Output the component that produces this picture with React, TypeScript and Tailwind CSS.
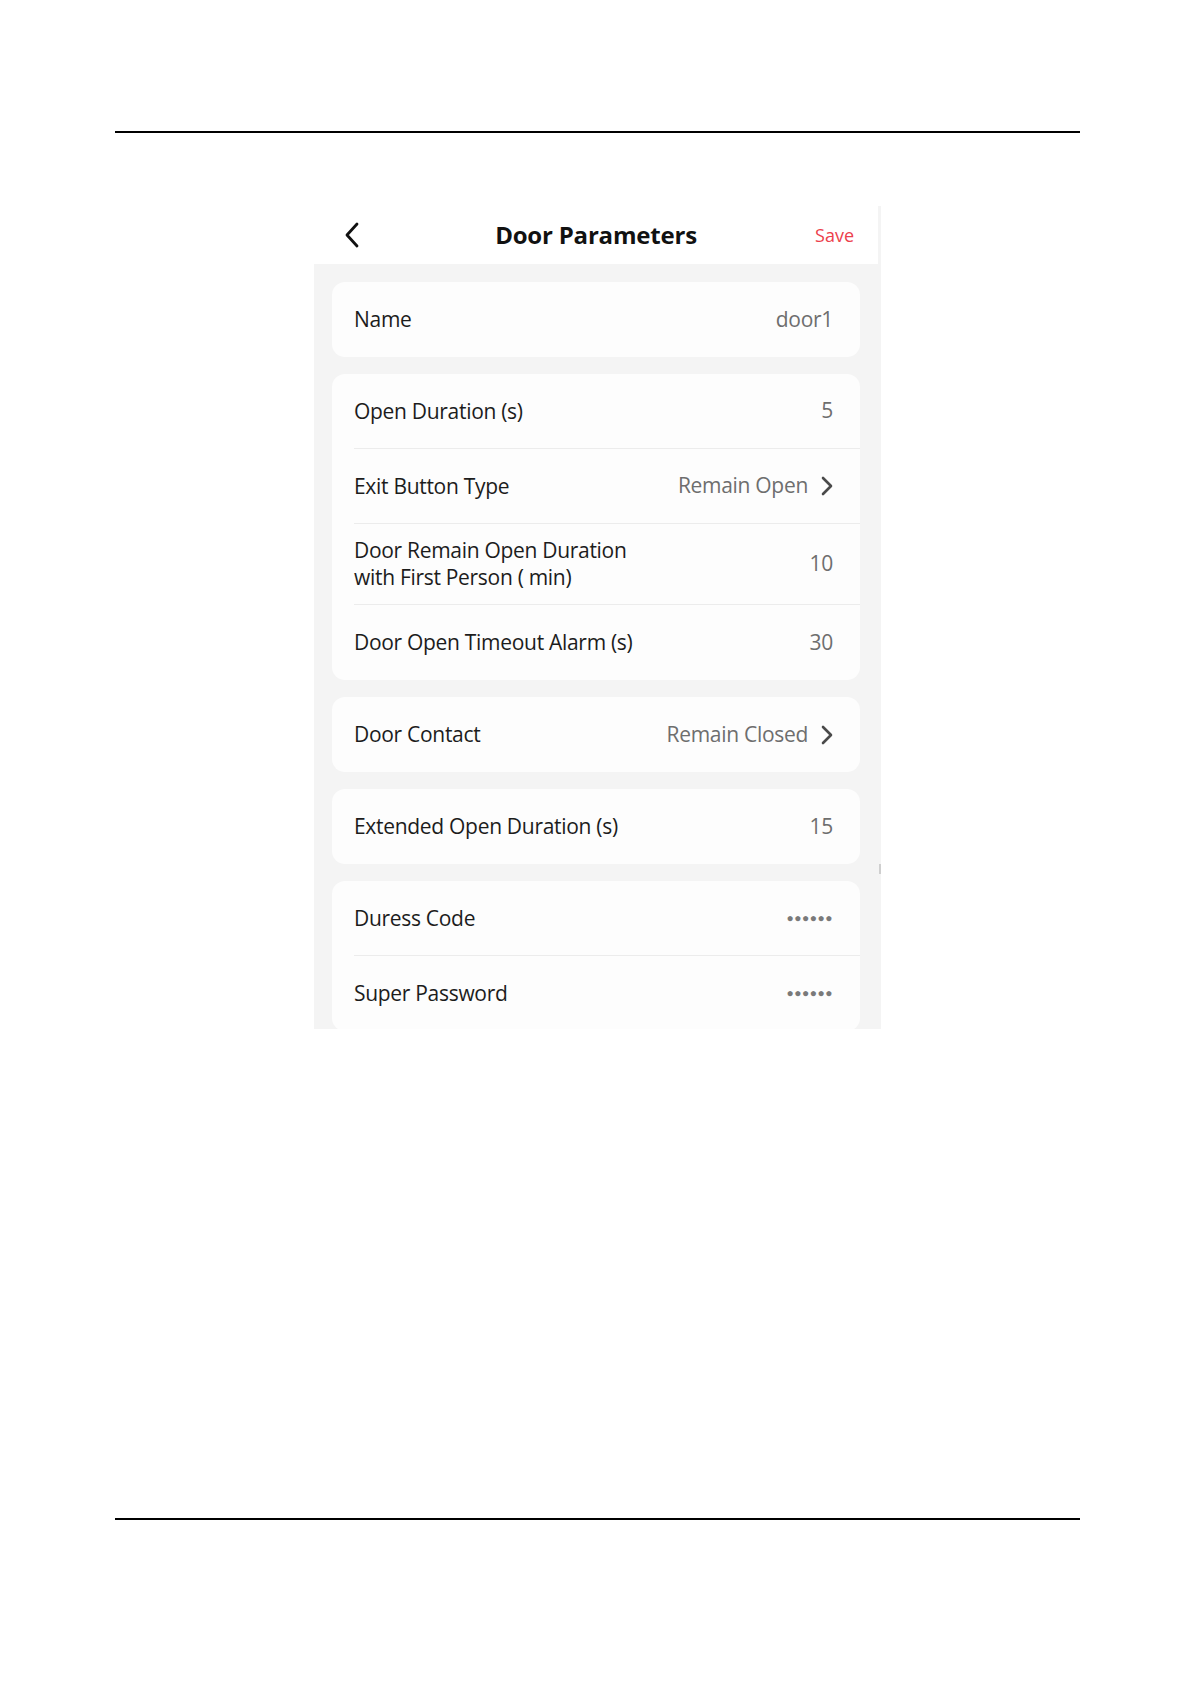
import { ReactNode } from "react";

function Chevron() {
  return (
    <svg width="12" height="20" viewBox="0 0 12 20" className="ml-[13px] shrink-0">
      <path d="M2 2 L10 10 L2 18" fill="none" stroke="#4a4a4a" strokeWidth="2.6" strokeLinecap="round" strokeLinejoin="round" />
    </svg>
  );
}

function Row({ label, value, arrow, tall, last }: { label: ReactNode; value: ReactNode; arrow?: boolean; tall?: boolean; last?: boolean }) {
  return (
    <div className={`flex items-center pl-[22px] ${tall ? "h-[81px]" : "h-[75px]"}`}>
      <div className={`flex items-center h-full w-full pr-[27px] ${last ? "" : "border-b border-[#ececec]"}`}>
        <div className="flex-1 text-[21px] leading-[27px] tracking-[-0.3px] text-[#1c1c1c]">{label}</div>
        <div className="flex items-center text-[21px] tracking-[-0.3px] text-[#6e6e6e]">
          {value}
          {arrow && <Chevron />}
        </div>
      </div>
    </div>
  );
}

function Card({ children }: { children: ReactNode }) {
  return <div className="bg-[#fdfdfd] rounded-[13px] overflow-hidden">{children}</div>;
}

const dots = <span className="text-[12px] tracking-[0.5px] text-[#7a7a7a]">●●●●●●</span>;

export default function App() {
  return (
    <div className="w-[1181px] h-[1685px] bg-white" style={{ fontFamily: '"Open Sans", "Noto Sans", sans-serif' }}>
      <div className="pt-[131px] pl-[115px] pr-[101px]">
        <div className="h-[2px] bg-black" />
      </div>

      <div className="ml-[314px] mt-[73px] w-[567px] h-[823px] bg-[#f4f4f4] overflow-hidden flex">
        <div className="w-[564px] shrink-0">
          <div className="h-[58px] bg-white flex items-center px-[30px]">
            <svg width="16" height="26" viewBox="0 0 16 26" className="shrink-0">
              <path d="M13 2 L3 13 L13 24" fill="none" stroke="#111" strokeWidth="2.8" strokeLinecap="round" strokeLinejoin="round" />
            </svg>
            <div className="flex-1 text-center text-[24px] font-bold tracking-[-0.2px] text-[#111] pl-[17px]">Door Parameters</div>
            <div className="text-[18px] text-[#ec3f4c] mr-[-6px]">Save</div>
          </div>

          <div className="px-[18px] pt-[18px] flex flex-col gap-[17px]">
            <Card>
              <Row label="Name" value="door1" last />
            </Card>
            <Card>
              <Row label="Open Duration (s)" value="5" />
              <Row label="Exit Button Type" value="Remain Open" arrow />
              <Row
                label={
                  <>
                    Door Remain Open Duration
                    <br />
                    with First Person ( min)
                  </>
                }
                value="10"
                tall
              />
              <Row label="Door Open Timeout Alarm (s)" value="30" last />
            </Card>
            <Card>
              <Row label="Door Contact" value="Remain Closed" arrow last />
            </Card>
            <Card>
              <Row label="Extended Open Duration (s)" value="15" last />
            </Card>
            <Card>
              <Row label="Duress Code" value={dots} />
              <Row label="Super Password" value={dots} />
            </Card>
          </div>
        </div>
        <div className="flex-1 flex flex-col items-center pt-[658px]">
          <div className="w-[2px] h-[10px] bg-[#cfcfcf]" />
        </div>
      </div>

      <div className="pl-[115px] pr-[101px] mt-[489px]">
        <div className="h-[2px] bg-black" />
      </div>
    </div>
  );
}
